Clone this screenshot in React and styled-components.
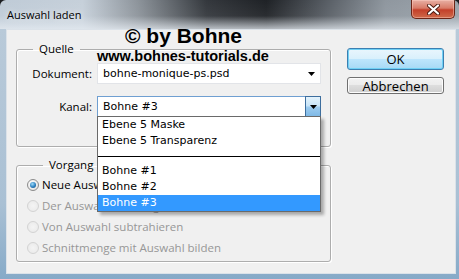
import styled, { createGlobalStyle } from 'styled-components';

const GlobalStyle = createGlobalStyle`
  html, body {
    margin: 0;
    padding: 0;
    background: #1c1e21;
  }
  body {
    width: 459px;
    height: 279px;
    overflow: hidden;
    font-family: "Open Sans", "Liberation Sans", sans-serif;
  }
`;

const Window = styled.div`
  position: relative;
  width: 459px;
  height: 279px;
  display: flex;
  flex-direction: column;
  border-radius: 6px 6px 0 0;
  overflow: hidden;
`;

const TitleBar = styled.div`
  height: 29px;
  flex: none;
  display: flex;
  align-items: flex-start;
  justify-content: space-between;
  padding-left: 7px;
  background:
    linear-gradient(180deg, rgba(255, 255, 255, 0) 0%, rgba(255, 255, 255, 0.05) 55%, rgba(230, 236, 242, 0.75) 100%),
    linear-gradient(90deg, #bfcbd7 0%, #c6d0da 18%, #8d949b 30%, #34383d 45%, #1f2226 58%, #5b6168 72%, #8f979f 84%, #9aa3ab 100%);
`;

const Title = styled.span`
  margin-top: 7px;
  font-size: 11px;
  line-height: 16px;
  color: #000;
  text-shadow: 0 0 6px rgba(255, 255, 255, 0.9);
`;

const CloseButton = styled.div`
  width: 44px;
  height: 19px;
  margin-right: 4px;
  box-sizing: border-box;
  display: flex;
  align-items: center;
  justify-content: center;
  border: 1px solid #6b2517;
  border-top: none;
  border-radius: 0 0 5px 5px;
  background: linear-gradient(180deg, #e8b0a4 0%, #d87b68 45%, #c3402a 55%, #cf6a4a 100%);
  box-shadow: inset 0 0 0 1px rgba(255, 210, 200, 0.45);
`;

const Frame = styled.div`
  flex: 1;
  display: flex;
  padding: 0 3px 5px 6px;
  background: linear-gradient(180deg, #b9cad9 0%, #a9c0d4 70%, #86aac8 100%);
`;

const Client = styled.div`
  flex: 1;
  display: flex;
  align-items: flex-start;
  padding-left: 9px;
  background: #f0f0f0;
  border: 1px solid #dbe2e9;
`;

const Main = styled.div`
  padding-top: 11px;
  display: flex;
  flex-direction: column;
`;

const Group = styled.fieldset`
  margin: ${({ $first }) => ($first ? '0' : '10px 0 0')};
  padding: ${({ $pad }) => $pad};
  width: 315px;
  min-width: 0;
  box-sizing: border-box;
  border: 1px solid #adadad;
  border-radius: 3px;
  box-shadow: inset 1px 1px 0 #fff, 1px 1px 0 #fff;
`;

const Legend = styled.legend`
  margin-left: 16px;
  padding: 0 6px;
  font-size: 11.5px;
  line-height: 16px;
  color: #000;
`;

const FieldGrid = styled.div`
  display: grid;
  grid-template-columns: 75px 224px;
  column-gap: 5px;
  row-gap: 12px;
  align-items: center;
`;

const Label = styled.span`
  text-align: right;
  font-size: 11.5px;
  color: #000;
`;

const Combo = styled.div`
  position: relative;
  height: 21px;
  box-sizing: border-box;
  display: flex;
  align-items: center;
  padding-left: 5px;
  background: #fff;
  border: 1px solid ${({ $focused }) => ($focused ? '#6f9fd1' : '#e2e4e8')};
  font-family: "DejaVu Sans", sans-serif;
  font-size: 11px;
  color: #000;
`;

const ComboText = styled.span`
  flex: 1;
`;

const PlainArrow = styled.span`
  width: 16px;
  display: flex;
  align-items: center;
  justify-content: center;
  margin-right: 1px;
`;

const DropButton = styled.span`
  align-self: stretch;
  width: 16px;
  margin: -1px -1px -1px 0;
  box-sizing: border-box;
  display: flex;
  align-items: center;
  justify-content: center;
  border: 1px solid #3d6e9e;
  background: linear-gradient(180deg, #e4f3fc 0%, #c9e5f8 45%, #9ccbef 55%, #7fb9e6 100%);
`;

const DropList = styled.div`
  position: absolute;
  top: 100%;
  left: -1px;
  width: 224px;
  box-sizing: border-box;
  z-index: 10;
  background: #fff;
  border: 1px solid #6a6a6a;
  box-shadow: 3px 3px 3px rgba(0, 0, 0, 0.3);
`;

const ListItem = styled.div`
  height: 16px;
  line-height: 16px;
  padding-left: 4px;
  white-space: nowrap;
  background: ${({ $selected }) => ($selected ? '#3399ff' : 'transparent')};
  color: ${({ $selected }) => ($selected ? '#fff' : '#000')};
`;

const Separator = styled.div`
  height: 14px;
  box-sizing: border-box;
  padding-top: 7px;
  &::after {
    content: '';
    display: block;
    height: 1px;
    background: #000;
  }
`;

const RadioRow = styled.div`
  height: 21px;
  display: flex;
  align-items: center;
  gap: 3px;
  font-size: 11.5px;
  white-space: nowrap;
  color: ${({ $disabled }) => ($disabled ? '#979797' : '#000')};
`;

const RadioCircle = styled.span`
  width: 12px;
  height: 12px;
  box-sizing: border-box;
  border-radius: 50%;
  display: flex;
  align-items: center;
  justify-content: center;
  border: 1px solid ${({ $disabled }) => ($disabled ? '#d3d3d3' : '#8b8b8b')};
  background: ${({ $disabled }) =>
    $disabled
      ? 'radial-gradient(circle at 50% 50%, #f4f4f4, #e8e8e8)'
      : 'radial-gradient(circle at 40% 35%, #ffffff, #dcdcdc)'};

  &::after {
    content: '';
    display: ${({ $checked }) => ($checked ? 'block' : 'none')};
    width: 6px;
    height: 6px;
    border-radius: 50%;
    background: radial-gradient(circle at 40% 35%, #9fdcfa 0%, #2a7fc0 55%, #0f4677 100%);
  }
`;

const Buttons = styled.div`
  margin-left: 16px;
  padding-top: 18px;
  display: flex;
  flex-direction: column;
  gap: 7px;
`;

const Button = styled.div`
  width: 97px;
  height: ${({ $default }) => ($default ? '22px' : '17px')};
  box-sizing: border-box;
  display: flex;
  align-items: center;
  justify-content: center;
  border-radius: 3px;
  font-size: 13px;
  color: #000;
  border: 1px solid ${({ $default }) => ($default ? '#3c7fb1' : '#707070')};
  background: ${({ $default }) =>
    $default
      ? 'linear-gradient(180deg, #e9f6fd 0%, #d9f0fc 50%, #bee6fd 50%, #a7d9f5 100%)'
      : 'linear-gradient(180deg, #f2f2f2 0%, #ebebeb 50%, #dddddd 50%, #cfcfcf 100%)'};
  box-shadow: inset 0 0 0 1px ${({ $default }) => ($default ? '#6fd0f5' : '#fcfcfc')};
`;

const Watermark = styled.div`
  position: absolute;
  left: ${({ $x }) => $x}px;
  top: ${({ $y }) => $y}px;
  z-index: 20;
  font-family: "Liberation Sans", Arial, sans-serif;
  font-weight: bold;
  font-size: ${({ $size }) => $size}px;
  line-height: 1;
  color: #000;
  white-space: nowrap;
`;

const Arrow = () => (
  <svg width="7" height="4" viewBox="0 0 7 4">
    <polygon points="0,0 7,0 3.5,4" fill="#000" />
  </svg>
);

const CloseIcon = () => (
  <svg width="13" height="11" viewBox="0 0 13 11">
    <path d="M2 1.5 L11 9.5 M11 1.5 L2 9.5" stroke="#4a1a10" strokeWidth="4" strokeLinecap="round" />
    <path d="M2 1.5 L11 9.5 M11 1.5 L2 9.5" stroke="#fff" strokeWidth="2.2" strokeLinecap="round" />
  </svg>
);

const channels = [
  { label: 'Ebene 5 Maske' },
  { label: 'Ebene 5 Transparenz' },
  { separator: true },
  { label: 'Bohne #1' },
  { label: 'Bohne #2' },
  { label: 'Bohne #3', selected: true },
];

const modes = [
  { label: 'Neue Auswahl', checked: true },
  { label: 'Der Auswahl hinzufügen', disabled: true },
  { label: 'Von Auswahl subtrahieren', disabled: true },
  { label: 'Schnittmenge mit Auswahl bilden', disabled: true },
];

const App = () => {
  return (
    <>
      <GlobalStyle />
      <Window>
        <TitleBar>
          <Title>Auswahl laden</Title>
          <CloseButton>
            <CloseIcon />
          </CloseButton>
        </TitleBar>
        <Frame>
          <Client>
            <Main>
              <Group $first $pad="6px 0 29px 0">
                <Legend>Quelle</Legend>
                <FieldGrid>
                  <Label>Dokument:</Label>
                  <Combo>
                    <ComboText>bohne-monique-ps.psd</ComboText>
                    <PlainArrow>
                      <Arrow />
                    </PlainArrow>
                  </Combo>
                  <Label>Kanal:</Label>
                  <Combo $focused>
                    <ComboText>Bohne #3</ComboText>
                    <DropButton>
                      <Arrow />
                    </DropButton>
                    <DropList>
                      {channels.map((item, index) =>
                        item.separator ? (
                          <Separator key={index} />
                        ) : (
                          <ListItem key={index} $selected={item.selected}>
                            {item.label}
                          </ListItem>
                        )
                      )}
                    </DropList>
                  </Combo>
                </FieldGrid>
              </Group>
              <Group $pad="1px 0 3px 10px">
                <Legend>Vorgang</Legend>
                {modes.map((mode) => (
                  <RadioRow key={mode.label} $disabled={mode.disabled}>
                    <RadioCircle $checked={mode.checked} $disabled={mode.disabled} />
                    {mode.label}
                  </RadioRow>
                ))}
              </Group>
            </Main>
            <Buttons>
              <Button $default>OK</Button>
              <Button>Abbrechen</Button>
            </Buttons>
          </Client>
        </Frame>
        <Watermark $x={125} $y={25} $size={21}>© by Bohne</Watermark>
        <Watermark $x={97} $y={49} $size={14.5}>www.bohnes-tutorials.de</Watermark>
      </Window>
    </>
  );
};

export default App;
